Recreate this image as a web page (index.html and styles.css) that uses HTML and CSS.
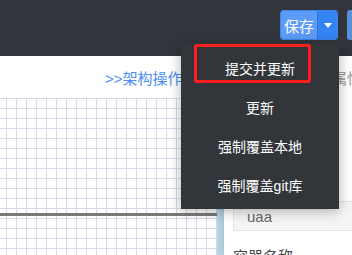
FILE: index.html
```html
<!DOCTYPE html>
<html lang="zh-CN">
<head>
<meta charset="utf-8">
<title>架构</title>
<link rel="stylesheet" href="styles.css">
</head>
<body>
<div class="app">
  <header class="topbar">
    <div class="split-btn">
      <span class="split-main">保存</span>
      <span class="split-caret"><span class="caret"></span></span>
    </div>
    <span class="next-btn"></span>
  </header>
  <main class="workspace">
    <section class="editor">
      <div class="editor-bar"><span class="crumb">&gt;&gt;架构操作说明</span></div>
      <div class="canvas">
        <div class="edge"></div>
      </div>
    </section>
    <div class="splitter"></div>
    <aside class="panel">
      <div class="panel-tabs"><span class="tab">属性</span></div>
      <div class="panel-body">
        <div class="field-input">uaa</div>
        <div class="field-label">容器名称</div>
      </div>
    </aside>
  </main>
  <ul class="menu">
    <li class="menu-item">提交并更新</li>
    <li class="menu-item">更新</li>
    <li class="menu-item">强制覆盖本地</li>
    <li class="menu-item">强制覆盖git库</li>
  </ul>
  <div class="highlight"></div>
</div>
</body>
</html>
```
FILE: styles.css
```css
* { box-sizing: border-box; }
html, body { margin: 0; padding: 0; }
body {
  width: 352px;
  height: 255px;
  overflow: hidden;
  background: #fff;
  font-family: "Liberation Sans", "Noto Sans CJK SC", sans-serif;
}
.app { position: relative; width: 352px; height: 255px; overflow: hidden; }

.topbar {
  height: 56px;
  background: #32363c;
  display: flex;
  align-items: flex-start;
  justify-content: flex-end;
  padding-top: 10px;
  margin-right: -20px;
}
.split-btn {
  display: flex;
  height: 30px;
  border-radius: 3px;
  overflow: hidden;
  border: 1px solid #3c84ee;
}
.split-main {
  width: 37px;
  background: #5c9cf7;
  color: #fff;
  font-size: 15px;
  display: flex;
  align-items: center;
  justify-content: center;
  border-right: 1px solid #2f73d9;
}
.split-caret {
  width: 19px;
  background: #3584f5;
  display: flex;
  align-items: center;
  justify-content: center;
}
.caret {
  width: 0; height: 0;
  border-left: 4px solid transparent;
  border-right: 4px solid transparent;
  border-top: 5px solid #fff;
}
.next-btn {
  width: 25px;
  height: 30px;
  margin-left: 9px;
  border-radius: 3px;
  background: #5a8fd9;
}

.workspace {
  display: flex;
  height: 199px;
}
.editor {
  width: 217px;
  display: flex;
  flex-direction: column;
}
.editor-bar {
  height: 42px;
  padding-left: 105px;
  display: flex;
  align-items: center;
  white-space: nowrap;
}
.crumb { color: #4a8ff5; font-size: 15px; }
.canvas {
  position: relative;
  flex: 1;
  background-color: #fff;
  background-image:
    linear-gradient(to right, #dcd8ec 1px, transparent 1px),
    linear-gradient(to bottom, #dcd8ec 1px, transparent 1px);
  background-size: 10px 10px;
  background-position: 6px 0, 0 0;
}
.edge {
  position: absolute;
  left: 0; right: 0;
  top: 115px;
  height: 3px;
  background: #7a7a7a;
}
.splitter {
  width: 7px;
  margin-top: 42px;
  background: #bcdce9;
}
.panel {
  flex: 1;
  background: #fff;
  box-shadow: -3px 0 8px rgba(0,0,0,0.12);
  overflow: hidden;
  position: relative;
}
.panel-tabs {
  height: 42px;
  padding-left: 108px;
  display: flex;
  align-items: center;
  white-space: nowrap;
}
.tab { color: #9a9a9a; font-size: 15px; }
.panel-body { padding: 103px 0 0 9px; }
.field-input {
  height: 30px;
  width: 140px;
  background: #f5f5f5;
  border: 1px solid #e4e4e4;
  color: #666;
  font-size: 15px;
  padding-left: 13px;
  display: flex;
  align-items: center;
}
.field-label {
  margin-top: 14px;
  color: #444;
  font-size: 15px;
  white-space: nowrap;
}

.menu {
  position: absolute;
  left: 181px;
  top: 43px;
  width: 158px;
  height: 166px;
  margin: 0;
  padding: 5px 0;
  list-style: none;
  background: #32363b;
  box-shadow: 0 2px 12px rgba(0,0,0,0.3);
}
.menu-item {
  height: 39px;
  color: #fff;
  font-size: 14px;
  display: flex;
  align-items: center;
  justify-content: center;
  white-space: nowrap;
}
.highlight {
  position: absolute;
  left: 194px;
  top: 44px;
  width: 117px;
  height: 39px;
  border: 3px solid #ff1e1e;
  border-radius: 3px;
}
```
